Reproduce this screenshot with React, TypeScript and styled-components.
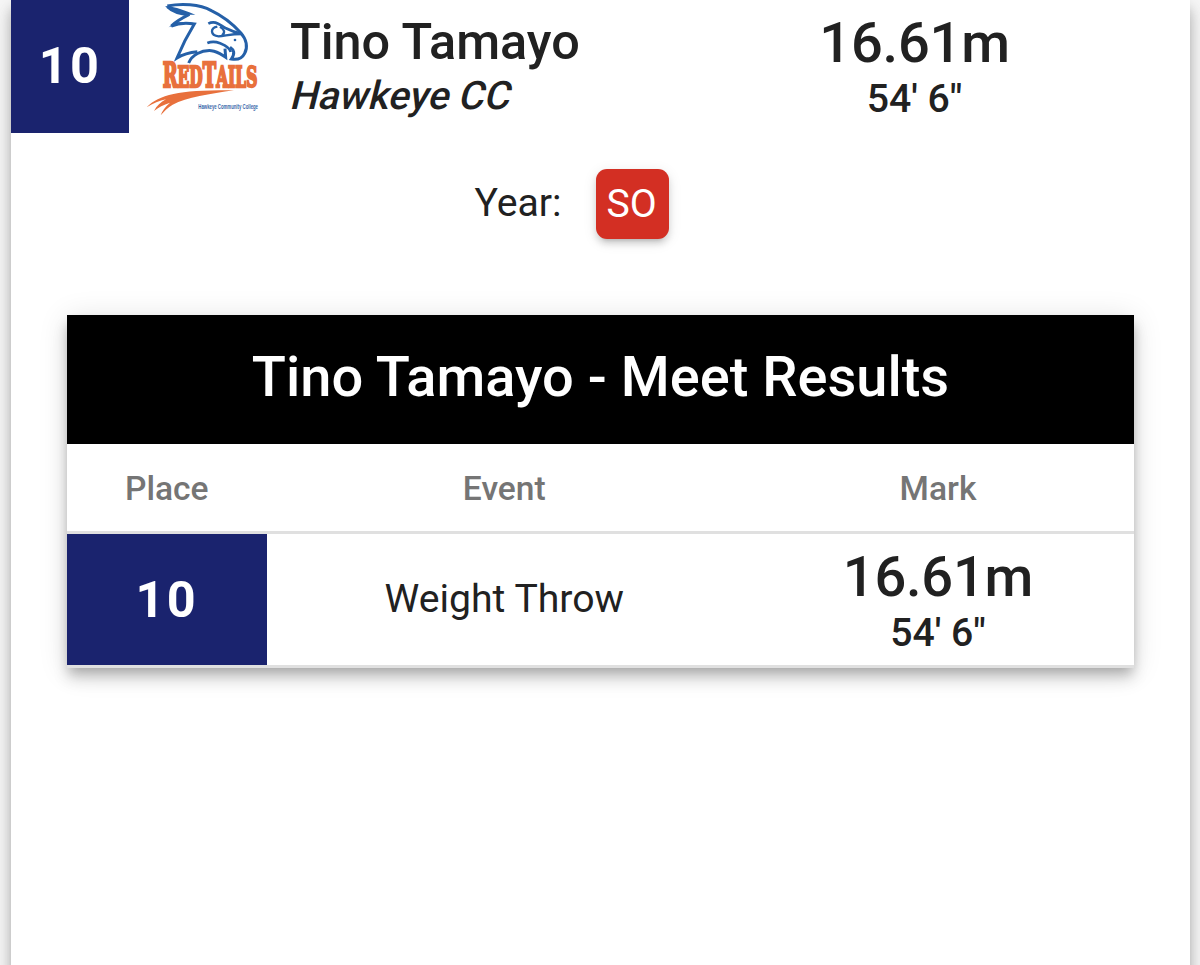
import React from "react"
import styled, { createGlobalStyle } from "styled-components"

const GlobalStyle = createGlobalStyle`
  * {
    box-sizing: border-box;
  }
  body {
    margin: 0;
    background-color: #f8f8f8;
    color: #212121;
    font-family: Roboto, "Liberation Sans", sans-serif;
    overflow: hidden;
  }
`

type Mark = {
  metric: string
  imperial: string
}

type Result = {
  place: number
  event: string
  mark: Mark
}

const athlete = {
  place: 10,
  name: "Tino Tamayo",
  team: "Hawkeye CC",
  year: "SO",
  mark: { metric: "16.61m", imperial: "54' 6\"" },
}

const results: Result[] = [
  { place: 10, event: "Weight Throw", mark: athlete.mark },
]

const TeamLogo: React.FC = () => (
  <LogoSvg viewBox="0 0 390 375">
    <g fill="none" stroke="#2560a8" strokeLinejoin="miter">
      <path
        strokeWidth="9"
        d="M82 18 C124 10 178 12 214 32 C248 48 276 70 302 98 C320 118 324 142 314 160 C306 176 290 180 274 177 C286 160 282 150 270 142"
      />
      <path
        strokeWidth="9"
        d="M82 20 C94 32 112 42 148 43 C126 54 108 64 94 78 C116 69 138 68 163 72 C142 106 124 142 111 174 C130 162 150 157 172 155"
      />
      <path strokeWidth="9" d="M146 189 C156 164 184 150 214 152 C234 154 244 164 257 172 L255 146" />
      <path strokeWidth="8" d="M202 129 C222 121 238 128 254 136 C264 142 270 148 272 156" />
      <path strokeWidth="8" d="M205 71 C225 60 238 74 256 84 C272 92 288 98 306 102" />
      <path strokeWidth="7" d="M232 80 C210 84 210 106 236 109 C256 108 270 102 306 102 M240 80 C254 88 256 98 246 106" />
    </g>
    <path
      fill="#2560a8"
      d="M75 18 C96 18 120 26 166 44 C130 46 100 40 75 18 Z M86 82 C104 66 126 62 166 70 C134 72 110 74 86 82 Z"
    />
    <circle cx="285" cy="120" r="4" fill="#2560a8" />
    <LogoName x="68" y="262" textLength="284" lengthAdjust="spacingAndGlyphs">
      R<tspan fontSize="84">ED</tspan>T<tspan fontSize="84">AILS</tspan>
    </LogoName>
    <path
      fill="#e8703c"
      d="M20 322 C60 282 120 270 282 271 C210 282 140 292 98 314 C84 322 72 334 62 346 C66 334 76 320 90 308 C70 314 56 322 42 333 C50 318 62 306 78 298 C58 302 40 310 20 322 Z"
    />
    <LogoCaption x="175" y="326" textLength="179" lengthAdjust="spacingAndGlyphs">
      Hawkeye Community College
    </LogoCaption>
  </LogoSvg>
)

const MarkCell: React.FC<{ mark: Mark }> = ({ mark }) => (
  <MarkWrapper>
    <MetricMark>{mark.metric}</MetricMark>
    <ImperialMark>{mark.imperial}</ImperialMark>
  </MarkWrapper>
)

const App: React.FC = () => {
  return (
    <>
      <GlobalStyle />
      <Screen>
        <Sheet>
          <AthleteRow>
            <PlaceCell $bottom={3}>{athlete.place}</PlaceCell>
            <TeamLogo />
            <AthleteInfo>
              <AthleteName>{athlete.name}</AthleteName>
              <TeamName>{athlete.team}</TeamName>
            </AthleteInfo>
            <MarkCell mark={athlete.mark} />
          </AthleteRow>
          <YearRow>
            <YearLabel>Year:</YearLabel>
            <YearChip>{athlete.year}</YearChip>
          </YearRow>
          <ResultsCard>
            <CardTitle>{athlete.name} - Meet Results</CardTitle>
            <HeadRow>
              <span>Place</span>
              <span>Event</span>
              <span>Mark</span>
            </HeadRow>
            {results.map((result) => (
              <ResultRow key={result.event}>
                <PlaceCell $bottom={0}>{result.place}</PlaceCell>
                <EventName>{result.event}</EventName>
                <MarkCell mark={result.mark} />
              </ResultRow>
            ))}
          </ResultsCard>
        </Sheet>
      </Screen>
    </>
  )
}

export default App

const Screen = styled.div`
  height: 965px;
  padding: 0 10px 0 11px;
  overflow: hidden;
`

const Sheet = styled.main`
  height: 1100px;
  background-color: #fff;
  box-shadow: 0 6px 11px -3px rgba(0, 0, 0, 0.2),
    0 11px 14px 0 rgba(0, 0, 0, 0.14), 0 3px 28px 0 rgba(0, 0, 0, 0.12);
`

const AthleteRow = styled.section`
  display: grid;
  grid-template-columns: 118px 161px 1fr 551px;
  height: 133px;
`

const PlaceCell = styled.div<{ $bottom: number }>`
  display: flex;
  align-items: center;
  justify-content: center;
  padding-bottom: ${(props) => props.$bottom}px;
  background-color: #1a236e;
  color: #fff;
  font-size: 50.4px;
  font-weight: 700;
  letter-spacing: 2.4px;
`

const LogoSvg = styled.svg`
  width: 130px;
  height: 125px;
  margin-left: 11px;
  overflow: visible;
`

const LogoName = styled.text`
  fill: #e8703c;
  stroke: #e8703c;
  stroke-width: 7px;
  font-family: "DejaVu Serif", serif;
  font-size: 98px;
  font-weight: 700;
`

const LogoCaption = styled.text`
  fill: #3a67aa;
  font-family: "Liberation Sans", sans-serif;
  font-size: 20px;
  font-weight: 700;
`

const AthleteInfo = styled.div`
  padding-top: 12px;
`

const AthleteName = styled.div`
  font-size: 50.4px;
  font-weight: 500;
  line-height: 59px;
`

/* slanted upright face, it runs wider than the true italic */
const TeamName = styled.div`
  width: fit-content;
  margin-left: 2px;
  font-size: 39.2px;
  font-weight: 500;
  line-height: 51px;
  transform: skewX(-14deg);
`

const MarkWrapper = styled.div`
  padding-top: 12px;
  text-align: center;
  font-weight: 500;
`

const MetricMark = styled.div`
  font-size: 56px;
  line-height: 62px;
  letter-spacing: -0.2px;
`

const ImperialMark = styled.div`
  font-size: 39.2px;
  line-height: 51px;
`

const YearRow = styled.section`
  display: flex;
  align-items: center;
  justify-content: center;
  gap: 34px;
  height: 70px;
  margin-top: 36px;
  padding-right: 58px;
  font-size: 39.2px;
`

const YearLabel = styled.span`
  padding-bottom: 2px;
`

const YearChip = styled.span`
  width: 73px;
  line-height: 70px;
  padding-right: 1px;
  border-radius: 11px;
  background-color: #d32f23;
  color: #fff;
  text-align: center;
  box-shadow: 0 8px 3px -6px rgba(0, 0, 0, 0.1),
    0 5px 6px 0 rgba(0, 0, 0, 0.12), 0 3px 14px 0 rgba(0, 0, 0, 0.1);
`

const ResultsCard = styled.section`
  width: 1067px;
  margin: 76px 0 0 56px;
  background-color: #fff;
  box-shadow: 0 6px 11px -3px rgba(0, 0, 0, 0.2),
    0 11px 14px 0 rgba(0, 0, 0, 0.14), 0 3px 28px 0 rgba(0, 0, 0, 0.12);
`

const CardTitle = styled.h2`
  height: 129px;
  margin: 0;
  background-color: #000;
  color: #fff;
  font-size: 56px;
  font-weight: 500;
  line-height: 124px;
  text-align: center;
`

const TableRow = styled.div`
  display: grid;
  grid-template-columns: 199.6px 475.4px 392px;
  border-bottom: 3px solid #e0e0e0;
`

const HeadRow = styled(TableRow)`
  height: 90px;
  color: #757575;
  font-size: 33.6px;
  font-weight: 500;
  line-height: 89px;
  text-align: center;
`

const ResultRow = styled(TableRow)`
  height: 134px;
`

const EventName = styled.div`
  font-size: 39.2px;
  line-height: 131px;
  text-align: center;
`
